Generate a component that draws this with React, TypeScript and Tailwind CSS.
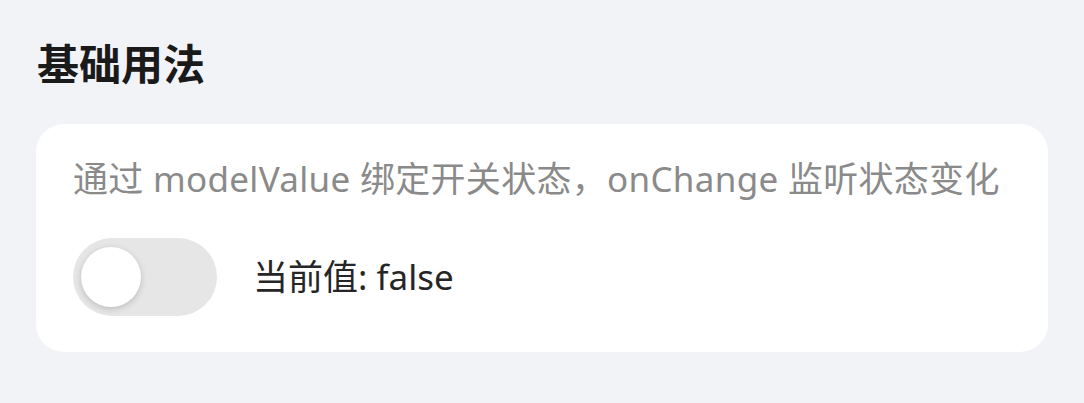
import { useState } from 'react';

const font = { fontFamily: '"Noto Sans", "Noto Sans CJK SC", sans-serif' };

const App = () => {
  const [value, setValue] = useState(false);

  return (
    <div className="w-[1084px] h-[403px] bg-[#f2f3f7] px-[36px] pt-[37px]" style={font}>
      <h2 className="text-[42px] leading-[54px] font-bold text-[#1a1a1a] pl-[1px]">基础用法</h2>
      <div className="mt-[33px] w-[1012px] h-[228px] bg-white rounded-[28px] px-[37px] pt-[31px]">
        <p className="text-[35px] leading-[48px] tracking-[0.3px] text-[#8a8a8a] whitespace-nowrap">
          通过 modelValue 绑定开关状态，onChange 监听状态变化
        </p>
        <div className="mt-[35px] flex items-center gap-[36px]">
          <button
            onClick={() => setValue(!value)}
            className={`w-[144px] h-[78px] rounded-full flex items-center px-[8px] ${value ? 'bg-[#1677ff] justify-end' : 'bg-[#e6e6e6] justify-start'}`}
          >
            <span className="w-[60px] h-[60px] rounded-full bg-white shadow-[0_2px_6px_rgba(0,0,0,0.18)]" />
          </button>
          <span className="text-[35px] leading-[46px] text-[#262626]">当前值: {value ? 'true' : 'false'}</span>
        </div>
      </div>
    </div>
  );
};

export default App;
